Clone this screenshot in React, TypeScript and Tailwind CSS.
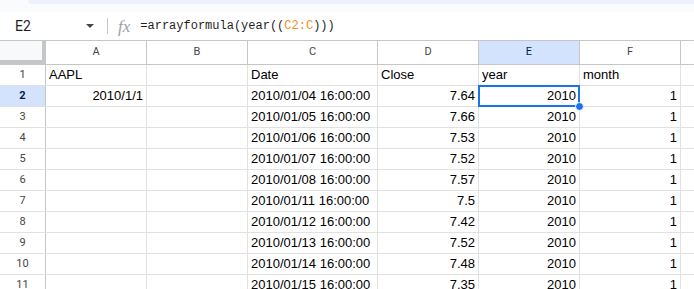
import React from "react";

const cols = [
  { key: "A", w: "w-[101px]" },
  { key: "B", w: "w-[101px]" },
  { key: "C", w: "w-[130px]" },
  { key: "D", w: "w-[101px]" },
  { key: "E", w: "w-[101px]" },
  { key: "F", w: "w-[101px]" },
];

const days = ["04", "05", "06", "07", "08", "11", "12", "13", "14", "15"];
const closes = ["7.64", "7.66", "7.53", "7.52", "7.57", "7.5", "7.42", "7.52", "7.48", "7.35"];

type Cell = { text: string; right?: boolean };

const rows: Cell[][] = [
  [{ text: "AAPL" }, { text: "" }, { text: "Date" }, { text: "Close" }, { text: "year" }, { text: "month" }],
  ...days.map((d, i) => [
    { text: i === 0 ? "2010/1/1" : "", right: true },
    { text: "" },
    { text: `2010/01/${d} 16:00:00` },
    { text: closes[i], right: true },
    { text: "2010", right: true },
    { text: "1", right: true },
  ]),
];

const App = () => {
  return (
    <div className="w-[694px] h-[289px] overflow-hidden bg-white font-['Liberation_Sans',Arial,sans-serif]">
      {/* toolbar tail */}
      <div className="h-[12px] bg-[#f9fbfd]">
        <div className="ml-[28px] h-[4px] bg-[#edf2fa] rounded-bl-[6px]" />
      </div>

      {/* formula bar */}
      <div className="h-[28px] flex items-center">
        <div className="w-[80px] pl-[15px] text-[14px] text-[#1f1f1f] font-['Roboto',sans-serif]">
          E2
        </div>
        <div className="w-0 h-0 border-l-[4px] border-r-[4px] border-t-[4px] border-l-transparent border-r-transparent border-t-[#444746] ml-[6px]" />
        <div className="w-px h-[16px] bg-[#c7c7c7] ml-[13px]" />
        <div className="ml-[10px] font-['Liberation_Serif',serif] italic text-[17px] text-[#9aa0a6] leading-none">
          fx
        </div>
        <div className="ml-[10px] font-['Liberation_Mono',monospace] text-[12px] text-[#1f1f1f]">
          =arrayformula(year((<span className="text-[#f0922b]">C2:C</span>)))
        </div>
      </div>

      {/* header row */}
      <div className="flex h-[25px] border-t border-b border-[#c4c7c5] text-[11px] font-['Roboto',sans-serif] text-[#444746]">
        <div className="w-[46px] bg-[#f8f9fa] relative">
          <div className="absolute right-0 top-0 bottom-0 w-[4px] bg-[#c4c7c5]" />
          <div className="absolute left-0 right-0 bottom-0 h-[4px] bg-[#c4c7c5]" />
        </div>
        {cols.map((c) => (
          <div
            key={c.key}
            className={`${c.w} shrink-0 flex items-center justify-center border-r border-[#c4c7c5] ${
              c.key === "E" ? "bg-[#d3e3fd] text-[#041e49]" : ""
            }`}
          >
            {c.key}
          </div>
        ))}
        <div className="flex-1" />
      </div>

      {/* body rows */}
      {rows.map((r, ri) => (
        <div
          key={ri}
          className={`flex h-[21px] border-b border-[#e1e1e1] text-[13px] text-black ${ri === 1 ? "relative z-10" : ""}`}
        >
          <div
            className={`w-[46px] shrink-0 flex items-center justify-center border-r border-[#c4c7c5] text-[11px] font-['Roboto',sans-serif] ${
              ri === 1 ? "bg-[#d3e3fd] text-[#041e49] font-bold" : "text-[#444746]"
            }`}
          >
            {ri + 1}
          </div>
          {r.map((cell, ci) => (
            <div
              key={ci}
              className={`${cols[ci].w} shrink-0 relative flex items-end pb-[1px] px-[3px] border-r border-[#e1e1e1] whitespace-nowrap overflow-visible ${
                cell.right ? "justify-end" : "justify-start"
              } ${ri === 1 && ci === 4 ? "z-10" : ""}`}
            >
              {cell.text}
              {ri === 1 && ci === 4 && (
                <>
                  <div className="absolute -left-px -top-px -right-px -bottom-px border-2 border-[#1a73e8]" />
                  <div className="absolute -right-[5px] -bottom-[5px] w-[9px] h-[9px] rounded-full bg-[#1a73e8] border border-white" />
                </>
              )}
            </div>
          ))}
          <div className="flex-1" />
        </div>
      ))}
    </div>
  );
};

export default App;
